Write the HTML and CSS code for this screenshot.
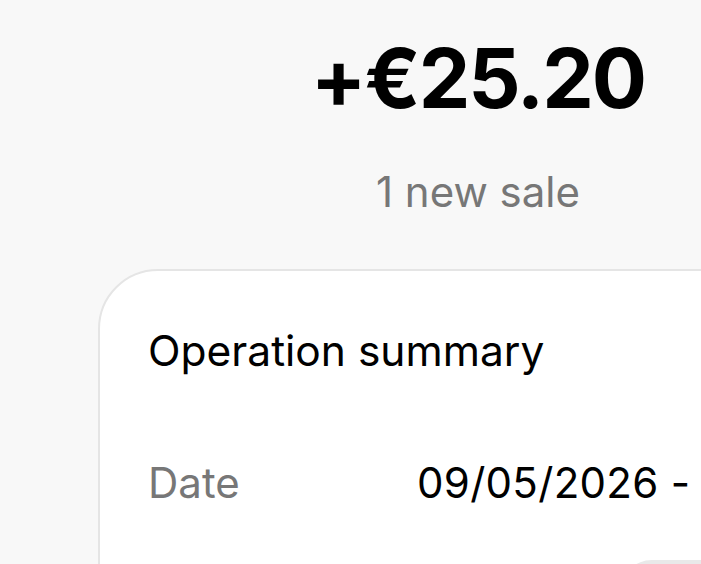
FILE: index.html
```html
<!DOCTYPE html>
<html lang="en">
<head>
<meta charset="utf-8">
<title>Sale</title>
<link rel="stylesheet" href="styles.css">
</head>
<body>
<main class="screen">
  <div class="amount">+€25.20</div>
  <div class="sub">1 new sale</div>
  <section class="card">
    <h2 class="card-title">Operation summary</h2>
    <div class="row">
      <span class="label">Date</span>
      <span class="value">09/05/2026 - 14:32</span>
    </div>
    <div class="row row-pill">
      <span class="pill"></span>
    </div>
  </section>
</main>
</body>
</html>
```
FILE: styles.css
```css
html, body {
  margin: 0;
  padding: 0;
  background: #f8f8f8;
  overflow: hidden;
  height: 564px;
}
.screen {
  width: 956px;
  display: flex;
  flex-direction: column;
  align-items: center;
  font-family: Inter, "Noto Sans", sans-serif;
  color: #000;
}
.amount {
  margin-top: 38px;
  font-size: 82px;
  line-height: 82px;
  font-weight: 700;
  letter-spacing: -2px;
}
.sub {
  margin-top: 51px;
  font-size: 42px;
  line-height: 42px;
  color: #777;
}
.card {
  box-sizing: border-box;
  margin-top: 56px;
  width: 760px;
  align-self: flex-start;
  margin-left: 98px;
  background: #fff;
  border: 2px solid #e5e5e5;
  border-radius: 60px;
  padding: 58px 48px 40px;
}
.card-title {
  margin: 0;
  font-size: 42.5px;
  line-height: 44px;
  font-weight: 400;
}
.row {
  display: grid;
  grid-template-columns: 269px 1fr;
  margin-top: 89px;
  font-size: 42px;
  line-height: 42px;
}
.label {
  color: #777;
}
.value {
  white-space: nowrap;
  letter-spacing: 0.3px;
}
.row-pill {
  display: flex;
  justify-content: flex-end;
  margin-top: 56px;
}
.pill {
  display: block;
  width: 260px;
  height: 64px;
  border-radius: 32px;
  background: #e9e9e9;
  margin-right: -72px;
}
```
